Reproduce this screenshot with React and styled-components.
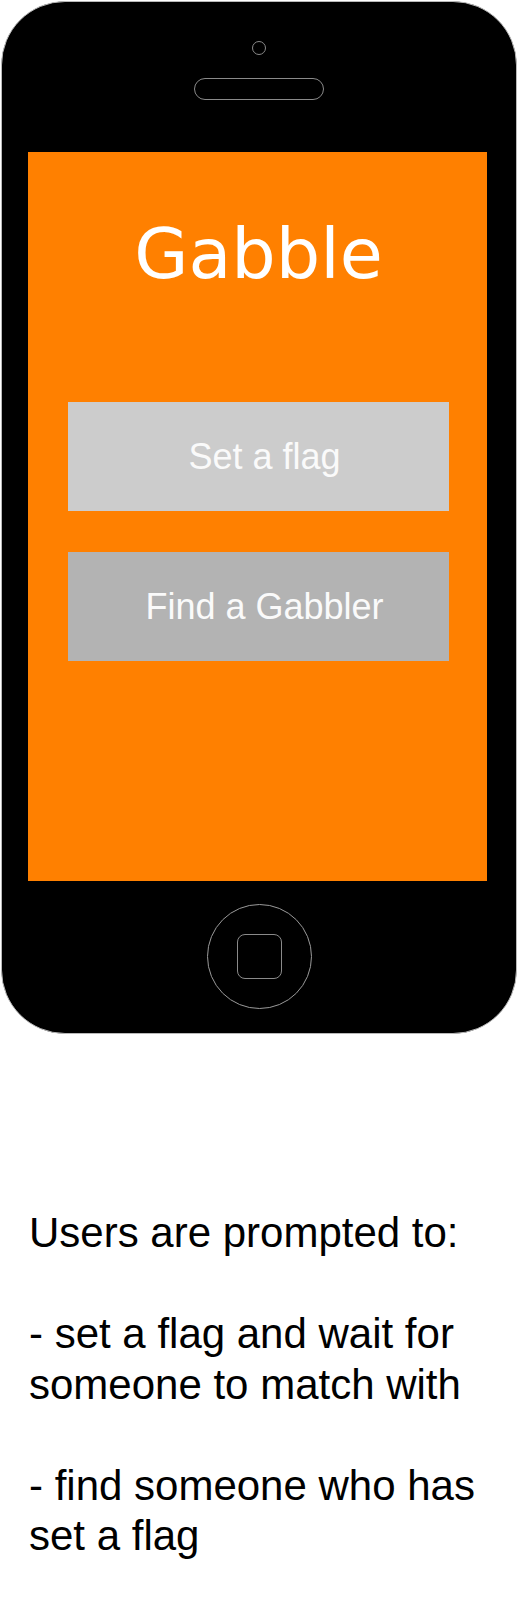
import React from "react";
import styled, { createGlobalStyle } from "styled-components";

const GlobalStyle = createGlobalStyle`
	body {
		margin: 0;
		background: #fff;
		font-family: "Liberation Sans", Arial, sans-serif;
	}
`;

export default function App(){
	const buttons = [
		{ label: "Set a flag", shade: "#cccccc" },
		{ label: "Find a Gabbler", shade: "#b3b3b3" }
	];

	return(
		<Page>
			<GlobalStyle />
			<Phone>
				<Camera />
				<Speaker />
				<Screen>
					<Title>Gabble</Title>
					<Menu>
						{buttons.map((b, i) => (
							<MenuButton key={i} shade={b.shade}>{b.label}</MenuButton>
						))}
					</Menu>
				</Screen>
				<HomeButton>
					<HomeSquare />
				</HomeButton>
			</Phone>
			<Notes>
				<p>Users are prompted to:</p>
				<p>- set a flag and wait for<br />someone to match with</p>
				<p>- find someone who has<br />set a flag</p>
			</Notes>
		</Page>
	);
}

const Page = styled.div`
	display: flex;
	flex-direction: column;
	width: 518px;
	min-height: 1601px;
`;

const Phone = styled.div`
	box-sizing: border-box;
	width: 516px;
	height: 1033px;
	margin: 1px 0 0 1px;
	background: #000;
	border: 1px solid #b8b8b8;
	border-radius: 64px;
	display: flex;
	flex-direction: column;
	align-items: center;
`;

const Camera = styled.div`
	box-sizing: border-box;
	width: 14px;
	height: 14px;
	margin-top: 39px;
	border: 1px solid #8a8a8a;
	border-radius: 50%;
`;

const Speaker = styled.div`
	box-sizing: border-box;
	width: 130px;
	height: 22px;
	margin-top: 23px;
	border: 1px solid #8a8a8a;
	border-radius: 11px;
`;

const Screen = styled.div`
	align-self: flex-start;
	width: 459px;
	height: 729px;
	margin: 52px 0 0 26px;
	background: #ff8000;
	display: flex;
	flex-direction: column;
	align-items: flex-start;
`;

const Title = styled.h1`
	align-self: center;
	margin: 67px 0 0 2px;
	font-family: "DejaVu Sans", Verdana, sans-serif;
	font-weight: normal;
	font-size: 70px;
	line-height: 70px;
	color: #fff;
`;

const Menu = styled.div`
	display: flex;
	flex-direction: column;
	gap: 41px;
	margin: 113px 0 0 40px;
`;

const MenuButton = styled.div`
	box-sizing: border-box;
	width: 381px;
	height: 109px;
	padding-left: 12px;
	background: ${p => p.shade};
	color: #fafafa;
	font-size: 36px;
	display: flex;
	align-items: center;
	justify-content: center;
`;

const HomeButton = styled.div`
	box-sizing: border-box;
	width: 105px;
	height: 105px;
	margin-top: 23px;
	border: 1px solid #9a9a9a;
	border-radius: 50%;
	display: flex;
	align-items: center;
	justify-content: center;
`;

const HomeSquare = styled.div`
	box-sizing: border-box;
	width: 45px;
	height: 45px;
	border: 1.5px solid #8a8a8a;
	border-radius: 8px;
`;

const Notes = styled.div`
	margin: 174px 0 0 29px;
	font-size: 42px;
	line-height: 50.5px;
	color: #000;

	p {
		margin: 0 0 50.5px 0;
	}
`;
